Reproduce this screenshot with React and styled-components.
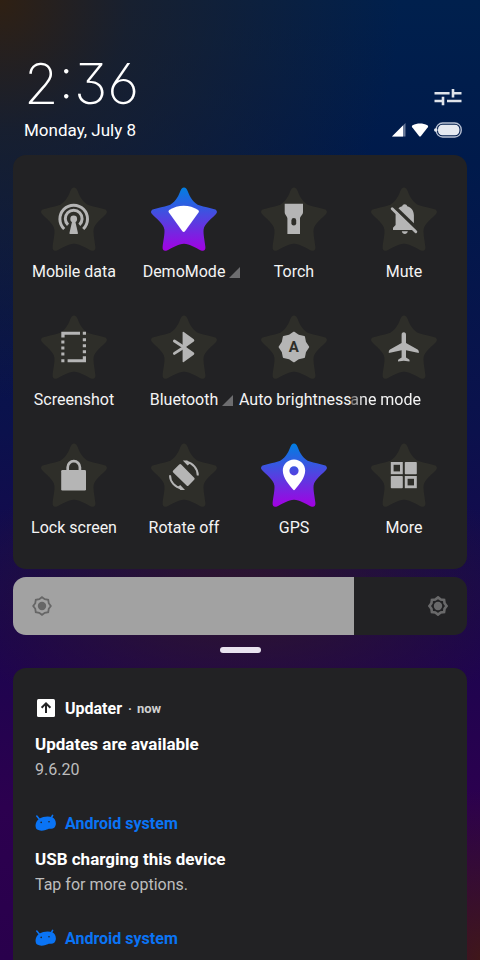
import React, { useState } from 'react';
import styled, { createGlobalStyle } from 'styled-components';

const GlobalStyle = createGlobalStyle`
  * {
    box-sizing: border-box;
  }

  body {
    margin: 0;
    background: #0a0f4a;
    color: #fff;
    font-family: Roboto, sans-serif;
  }
`;

const Shade = styled.main`
  display: flex;
  flex-direction: column;
  height: 100vh;
  padding: 54px 13px 0;
  overflow: hidden;
  background:
    radial-gradient(circle at 0 0, #2f2013 0, rgba(31, 32, 38, 0.75) 130px, transparent 400px),
    radial-gradient(ellipse 300px 140px at 50% 62%, #2f162c 0, transparent 100%),
    radial-gradient(ellipse 110px 170px at 100% 100%, #40171a 0, transparent 100%),
    linear-gradient(#00204d 0, #001a4b 17%, #0b114c 45%, #1b054f 66%, #2c004f 84%, #29004c 100%);
`;

const Header = styled.header`
  display: flex;
  align-items: flex-end;
  justify-content: space-between;
  padding: 0 5px 14px 11px;
`;

const Clock = styled.time`
  display: block;
  font-family: Inter, sans-serif;
  font-size: 56px;
  font-weight: 200;
  line-height: 60px;
  font-feature-settings: 'cv09', 'ss01';
`;

const DateText = styled.div`
  margin-top: 5px;
  font-size: 17px;
  line-height: 22px;
`;

const HeaderSide = styled.div`
  display: flex;
  flex-direction: column;
  align-items: flex-end;
  gap: 16px;
  padding-bottom: 3px;
`;

const IconButton = styled.button`
  display: flex;
  padding: 0;
  border: none;
  background: transparent;
  cursor: pointer;
`;

const StatusIcons = styled.div`
  display: flex;
  align-items: center;
  gap: 5px;
`;

const Card = styled.section`
  flex: none;
  border-radius: 13px;
  background: #222224;
`;

const TileGrid = styled(Card)`
  display: grid;
  grid-template-columns: repeat(4, minmax(0, 1fr));
  row-gap: 32px;
  padding: 31px 8px 31px 6px;
`;

const Tile = styled.button`
  display: flex;
  flex-direction: column;
  align-items: center;
  gap: 8px;
  padding: 0;
  border: none;
  background: transparent;
  color: ${({ $on }) => ($on ? '#fff' : '#b5b5b5')};
  font: inherit;
  cursor: pointer;
`;

const TileLabel = styled.span`
  display: grid;
  grid-template-columns: minmax(0, 1fr) auto minmax(0, 1fr);
  width: 100%;
  color: #f4f4f4;
  font-size: 16px;
  line-height: 20px;
  white-space: nowrap;
`;

const LabelText = styled.span`
  grid-column: 2;
`;

// long label caught halfway through its scroll, faded at the left edge
const ScrollingLabel = styled.span`
  align-self: flex-end;
  margin-right: 38px;
  color: #f4f4f4;
  font-size: 16px;
  line-height: 20px;
  white-space: nowrap;
  mask-image: linear-gradient(to right, rgba(0, 0, 0, 0.3), #000 14px);
`;

const ExpandMark = styled.svg`
  align-self: center;
  margin-left: 4px;
  fill: #6d6d6f;
`;

const Brightness = styled.label`
  position: relative;
  display: block;
  flex: none;
  margin-top: 8px;
`;

const BrightnessRange = styled.input`
  display: block;
  width: 100%;
  height: 58px;
  margin: 0;
  appearance: none;
  border-radius: 13px;
  cursor: pointer;

  &::-webkit-slider-thumb {
    appearance: none;
    width: 1px;
    height: 58px;
    background: transparent;
  }
`;

const BrightnessIcon = styled.svg`
  position: absolute;
  top: 19px;
  left: ${({ $end }) => ($end ? 'auto' : '19px')};
  right: ${({ $end }) => ($end ? '19px' : 'auto')};
  color: ${({ $end }) => ($end ? '#69696a' : '#666')};
  pointer-events: none;
`;

const Handle = styled.div`
  flex: none;
  align-self: center;
  width: 41px;
  height: 6px;
  margin: 12px 0 15px;
  border-radius: 3px;
  background: #e9e3ef;
`;

const Notifications = styled(Card)`
  display: flex;
  flex-direction: column;
  gap: 29px;
  padding: 28px 22px;
`;

const NotificationHead = styled.div`
  display: flex;
  align-items: center;
  height: 24px;
  margin-bottom: 12px;
  color: ${({ $system }) => ($system ? '#0a74f5' : '#fff')};
  font-size: 16px;
  font-weight: 700;
`;

const AppIcon = styled.svg`
  flex: none;
  width: 22px;
  height: 20px;
  margin-right: 8px;
`;

const When = styled.span`
  display: flex;
  gap: 5px;
  margin-left: 6px;
  color: #d0d0d0;
  font-size: 13px;
  font-weight: 700;
`;

const Title = styled.h2`
  margin: 0;
  font-size: 17px;
  font-weight: 700;
  line-height: 25px;
`;

const Body = styled.p`
  margin: 0;
  color: #bdbdbd;
  font-size: 16px;
  line-height: 25px;
`;

const STAR =
  'M34 1.5C35.8 1.5 36.8 3 37.6 5C40.4 12 43.4 17.4 50 19.6C54 21 59.6 21.8 64.4 23.2C67.2 24 67.6 26.2 66 28C62 32.6 54.4 37.6 53.6 43.4C53.1 48 54.8 55 55.4 61C55.7 64.2 53.8 65.6 51 64.4C45.6 62 39.6 57.8 34 57.8C28.4 57.8 22.4 62 17 64.4C14.2 65.6 12.3 64.2 12.6 61C13.2 55 14.9 48 14.4 43.4C13.6 37.6 6 32.6 2 28C.4 26.2.8 24 3.6 23.2C8.4 21.8 14 21 18 19.6C24.6 17.4 27.6 12 30.4 5C31.2 3 32.2 1.5 34 1.5Z';

// eight-pointed badge used by the brightness icons
const badgePoints = (cx, cy, outer, inner) =>
  Array.from({ length: 16 }, (_, i) => {
    const r = i % 2 ? inner : outer;
    const a = (i * Math.PI) / 8;
    return `${(cx + r * Math.sin(a)).toFixed(2)},${(cy - r * Math.cos(a)).toFixed(2)}`;
  }).join(' ');

const OFF = '#2e2e29';

const glyphs = {
  data: (
    <>
      <g fill="none" stroke="currentColor" strokeWidth="3">
        <path d="M24.2 43A13.8 13.8 0 1 1 43.2 43" />
        <path d="M28 38.8A8.4 8.4 0 1 1 39.4 38.8" />
      </g>
      <circle cx="33.7" cy="33" r="3.4" fill="currentColor" />
      <path d="M32.2 35H35.2L38 47.2Q38 48 37.2 48H30.2Q29.4 48 29.4 47.2Z" fill="currentColor" />
    </>
  ),
  wifi: (
    <path
      d="M18.9 26.6Q17.8 25 19.2 24C28 18.2 39.4 18.2 48.2 24Q49.6 25 48.5 26.6L35 45.2Q33.7 46.8 32.4 45.2Z"
      fill="currentColor"
    />
  ),
  torch: (
    <>
      <path d="M24.7 17.7H43V26.2C43 29 40 30 40 32.5V48H27.4V32.5C27.4 30 24.7 29 24.7 26.2Z" fill="currentColor" />
      <rect x="31.4" y="32" width="4.8" height="7.6" rx="2.4" fill={OFF} />
    </>
  ),
  mute: (
    <>
      <path
        d="M34.7 18.2C36 18.2 37 19 37.2 20.3C41.4 21.4 43.9 25 43.9 29.3V39.4L46 42V44H23V41.8L25.6 39V29.3C25.6 25 28 21.4 32.2 20.3C32.4 19 33.4 18.2 34.7 18.2Z"
        fill="currentColor"
      />
      <path d="M31.8 45.2H37.8C37.2 48.8 32.4 48.8 31.8 45.2Z" fill="currentColor" />
      <path d="M23.6 20L48.6 44.4" stroke={OFF} strokeWidth="3.6" />
      <path d="M22.2 22.8L45.8 45.8" stroke="currentColor" strokeWidth="2.9" strokeLinecap="round" />
    </>
  ),
  screenshot: (
    <path
      d="M21.3 17.7H40V20.7H24.6V23.5H21.3ZM42.8 17.7H46V20.7H42.8ZM21.3 26.4H24.4V29.4H21.3ZM21.3 32.4H24.4V35.4H21.3ZM21.3 38.4H24.4V41.4H21.3ZM21.3 45.3H24.4V48.3H21.3ZM42.8 24.2H46V27.2H42.8ZM42.8 30.2H46V33.2H42.8ZM42.8 36.2H46V39.2H42.8ZM42.8 42.2H46V48.3H27.6V45.3H42.8Z"
      fill="currentColor"
    />
  ),
  bluetooth: (
    <>
      <path
        d="M32.6 18.6Q32.6 17.4 33.8 18L43.8 25.2Q45 26.4 43.8 27.4L36 33L43.8 38.6Q45 39.8 43.8 40.8L33.8 48Q32.6 48.6 32.6 47.4Z"
        fill="currentColor"
      />
      <path d="M24.4 27L34 33.2L24.4 39.4" fill="none" stroke="currentColor" strokeWidth="2.9" strokeLinecap="round" />
    </>
  ),
  auto: (
    <>
      <polygon
        points={badgePoints(33.9, 33, 14.4, 12.2)}
        fill="currentColor"
        stroke="currentColor"
        strokeWidth="1.8"
        strokeLinejoin="round"
      />
      <text x="33.9" y="38" textAnchor="middle" fontSize="15" fontWeight="700" fill={OFF}>
        A
      </text>
    </>
  ),
  plane: (
    <path
      d="M33.8 18.2C35.4 18.2 36 19.4 36 20.8V29L47.6 35.4Q48.8 36.2 48.8 37.6V39L36 36.2V43.4L39.2 45.6Q39.8 46.2 39.5 47.6L33.8 46.8L28.1 47.6Q27.8 46.2 28.4 45.6L31.6 43.4V36.2L18.8 39V37.6Q18.8 36.2 20 35.4L31.6 29V20.8C31.6 19.4 32.2 18.2 33.8 18.2Z"
      fill="currentColor"
    />
  ),
  lock: (
    <>
      <rect x="21.2" y="28" width="24.8" height="20.4" rx="1.2" fill="currentColor" />
      <path d="M27.7 29V25.3A6.1 6.1 0 0 1 39.9 25.3V29" fill="none" stroke="currentColor" strokeWidth="2.7" />
    </>
  ),
  rotate: (
    <>
      <path
        d="M29.2 22.6Q30.2 21.6 31.2 22.6L44.2 35.8Q45.2 36.8 44.2 37.8L38.6 43.4Q37.6 44.4 36.6 43.4L23.2 30.4Q22.2 29.4 23.2 28.4Z"
        fill="currentColor"
      />
      <path d="M36 19.8C43 21.2 47.8 26.6 47.8 33.4M31.8 46.6C24.8 45.2 20 39.8 20 33.2" fill="none" stroke="currentColor" strokeWidth="2" />
      <path d="M32.8 18.4H37.4L40 21.4L37.6 23.4ZM35 48H30.4L27.8 45L30.2 43Z" fill="currentColor" />
    </>
  ),
  gps: (
    <path
      fillRule="evenodd"
      d="M34 17.4C40.4 17.4 45.2 22.4 45.2 28.6C45.2 36 38.6 43.4 35 47.6Q34 48.8 33 47.6C29.4 43.4 22.8 36 22.8 28.6C22.8 22.4 27.6 17.4 34 17.4ZM34 24.2A4.6 4.6 0 1 0 34 33.4A4.6 4.6 0 1 0 34 24.2Z"
      fill="currentColor"
    />
  ),
  more: (
    <>
      <g fill="currentColor">
        <rect x="34.8" y="20" width="12" height="12.2" rx=".8" />
        <rect x="20.8" y="34" width="12" height="12.2" rx=".8" />
      </g>
      <g fill="none" stroke="currentColor" strokeWidth="2.8">
        <rect x="22.2" y="21.4" width="9.2" height="9.4" />
        <rect x="36.2" y="35.4" width="9.2" height="9.4" />
      </g>
    </>
  ),
};

const tiles = [
  { id: 'data', label: 'Mobile data' },
  { id: 'wifi', label: 'DemoMode', on: true, expandable: true },
  { id: 'torch', label: 'Torch' },
  { id: 'mute', label: 'Mute' },
  { id: 'screenshot', label: 'Screenshot' },
  { id: 'bluetooth', label: 'Bluetooth', expandable: true },
  { id: 'auto', label: 'Auto brightness' },
  { id: 'plane', label: 'ane mode', scrolling: true },
  { id: 'lock', label: 'Lock screen' },
  { id: 'rotate', label: 'Rotate off' },
  { id: 'gps', label: 'GPS', on: true },
  { id: 'more', label: 'More' },
];

const notifications = [
  { id: 1, app: 'Updater', when: 'now', title: 'Updates are available', body: '9.6.20' },
  { id: 2, app: 'Android system', system: true, title: 'USB charging this device', body: 'Tap for more options.' },
  { id: 3, app: 'Android system', system: true },
];

const QuickTile = ({ tile }) => (
  <Tile type="button" aria-pressed={Boolean(tile.on)} $on={tile.on}>
    <svg width="68" height="68" viewBox="0 0 68 68" aria-hidden="true">
      <defs>
        <linearGradient id={`star-${tile.id}`} x1="0" y1="0" x2="0" y2="1">
          <stop offset="0" stopColor="#007fe2" />
          <stop offset=".45" stopColor="#4b48e0" />
          <stop offset="1" stopColor="#a400e2" />
        </linearGradient>
      </defs>
      <path d={STAR} fill={tile.on ? `url(#star-${tile.id})` : OFF} />
      {glyphs[tile.id]}
    </svg>
    {tile.scrolling ? (
      <ScrollingLabel>{tile.label}</ScrollingLabel>
    ) : (
      <TileLabel>
        <LabelText>{tile.label}</LabelText>
        {tile.expandable && (
          <ExpandMark width="11" height="11" viewBox="0 0 11 11" aria-hidden="true">
            <path d="M11 0V11H0Z" />
          </ExpandMark>
        )}
      </TileLabel>
    )}
  </Tile>
);

const SunIcon = ({ end }) => (
  <BrightnessIcon $end={end} width="20" height="20" viewBox="0 0 20 20" aria-hidden="true">
    <polygon
      points={badgePoints(10, 10, end ? 8.6 : 8.8, end ? 7.1 : 7.3)}
      fill="none"
      stroke="currentColor"
      strokeWidth={end ? 2.6 : 1.8}
    />
    <circle cx="10" cy="10" r="4.2" fill="currentColor" />
  </BrightnessIcon>
);

const UpdaterIcon = () => (
  <AppIcon viewBox="0 0 22 20" aria-hidden="true">
    <rect x="2" y="1" width="18" height="18" rx="1.5" fill="#fff" />
    <path d="M11 15V6M6.6 9.8L11 5.4L15.4 9.8" fill="none" stroke="#222224" strokeWidth="2" />
  </AppIcon>
);

const AndroidIcon = () => (
  <AppIcon viewBox="0 0 22 20" aria-hidden="true">
    <path d="M1.8 3L4.6 6.4M17.6 2.4L15.6 6" stroke="currentColor" strokeWidth="1.6" strokeLinecap="round" />
    <path
      d="M4.6 5.4C8 3.4 13.6 2.8 17.2 4.2C20 5.4 21.2 8.4 20.8 11.6C20.4 14.6 18.4 16 15.6 15.8C13.4 15.6 12.6 16.4 10.6 17C7.6 17.9 4.4 18 2.2 16.6C-.4 14.6-.2 8.2 4.6 5.4Z"
      fill="currentColor"
    />
    <circle cx="6.2" cy="9.4" r=".8" fill="#222224" />
    <circle cx="14" cy="8.8" r=".8" fill="#222224" />
  </AppIcon>
);

export default function App() {
  const [brightness, setBrightness] = useState(75);

  return (
    <>
      <GlobalStyle />
      <Shade>
        <Header>
          <div>
            <Clock>2:36</Clock>
            <DateText>Monday, July 8</DateText>
          </div>
          <HeaderSide>
            <IconButton type="button" aria-label="Edit settings">
              <svg width="28" height="18" viewBox="0 0 28 18" stroke="#dfe3ea" strokeWidth="2.6" fill="none">
                <path d="M.5 5.2H15.6M19 1V9.6M19 5.2H27.5M.5 13H9.4M9 8.8V17.2M13 13H27.5" />
              </svg>
            </IconButton>
            <StatusIcons>
              <svg width="14" height="14" viewBox="0 0 14 14" aria-hidden="true">
                <path d="M13.5 0V13.5H0Z" fill="#6a7a99" />
                <path d="M11 2.6V13.5H0Z" fill="#fff" />
              </svg>
              <svg width="18" height="14" viewBox="0 0 18 14" aria-hidden="true">
                <path d="M1.2 4.2Q.4 3 1.6 2.2C6 -.2 12 -.2 16.4 2.2Q17.6 3 16.8 4.2L9.8 13.2Q9 14 8.2 13.2Z" fill="#fff" />
              </svg>
              <svg width="28" height="16" viewBox="0 0 28 16" aria-hidden="true">
                <rect x="2.2" y="1" width="25" height="14" rx="6.4" fill="none" stroke="#b9c2d4" strokeWidth="1.4" />
                <rect x="4" y="2.8" width="21.4" height="10.4" rx="4.4" fill="#e6e9f0" />
                <circle cx="1.8" cy="8" r="1.8" fill="#e6e9f0" />
              </svg>
            </StatusIcons>
          </HeaderSide>
        </Header>

        <TileGrid aria-label="Quick settings">
          {tiles.map((tile) => (
            <QuickTile key={tile.id} tile={tile} />
          ))}
        </TileGrid>

        <Brightness>
          <BrightnessRange
            type="range"
            min="0"
            max="100"
            value={brightness}
            aria-label="Brightness"
            onChange={(e) => setBrightness(Number(e.target.value))}
            style={{ background: `linear-gradient(to right, #a2a2a2 ${brightness}%, #222224 ${brightness}%)` }}
          />
          <SunIcon />
          <SunIcon end />
        </Brightness>

        <Handle />

        <Notifications aria-label="Notifications">
          {notifications.map((item) => (
            <article key={item.id}>
              <NotificationHead $system={item.system}>
                {item.system ? <AndroidIcon /> : <UpdaterIcon />}
                {item.app}
                {item.when && (
                  <When>
                    <span>·</span>
                    <span>{item.when}</span>
                  </When>
                )}
              </NotificationHead>
              {item.title && <Title>{item.title}</Title>}
              {item.body && <Body>{item.body}</Body>}
            </article>
          ))}
        </Notifications>
      </Shade>
    </>
  );
}
